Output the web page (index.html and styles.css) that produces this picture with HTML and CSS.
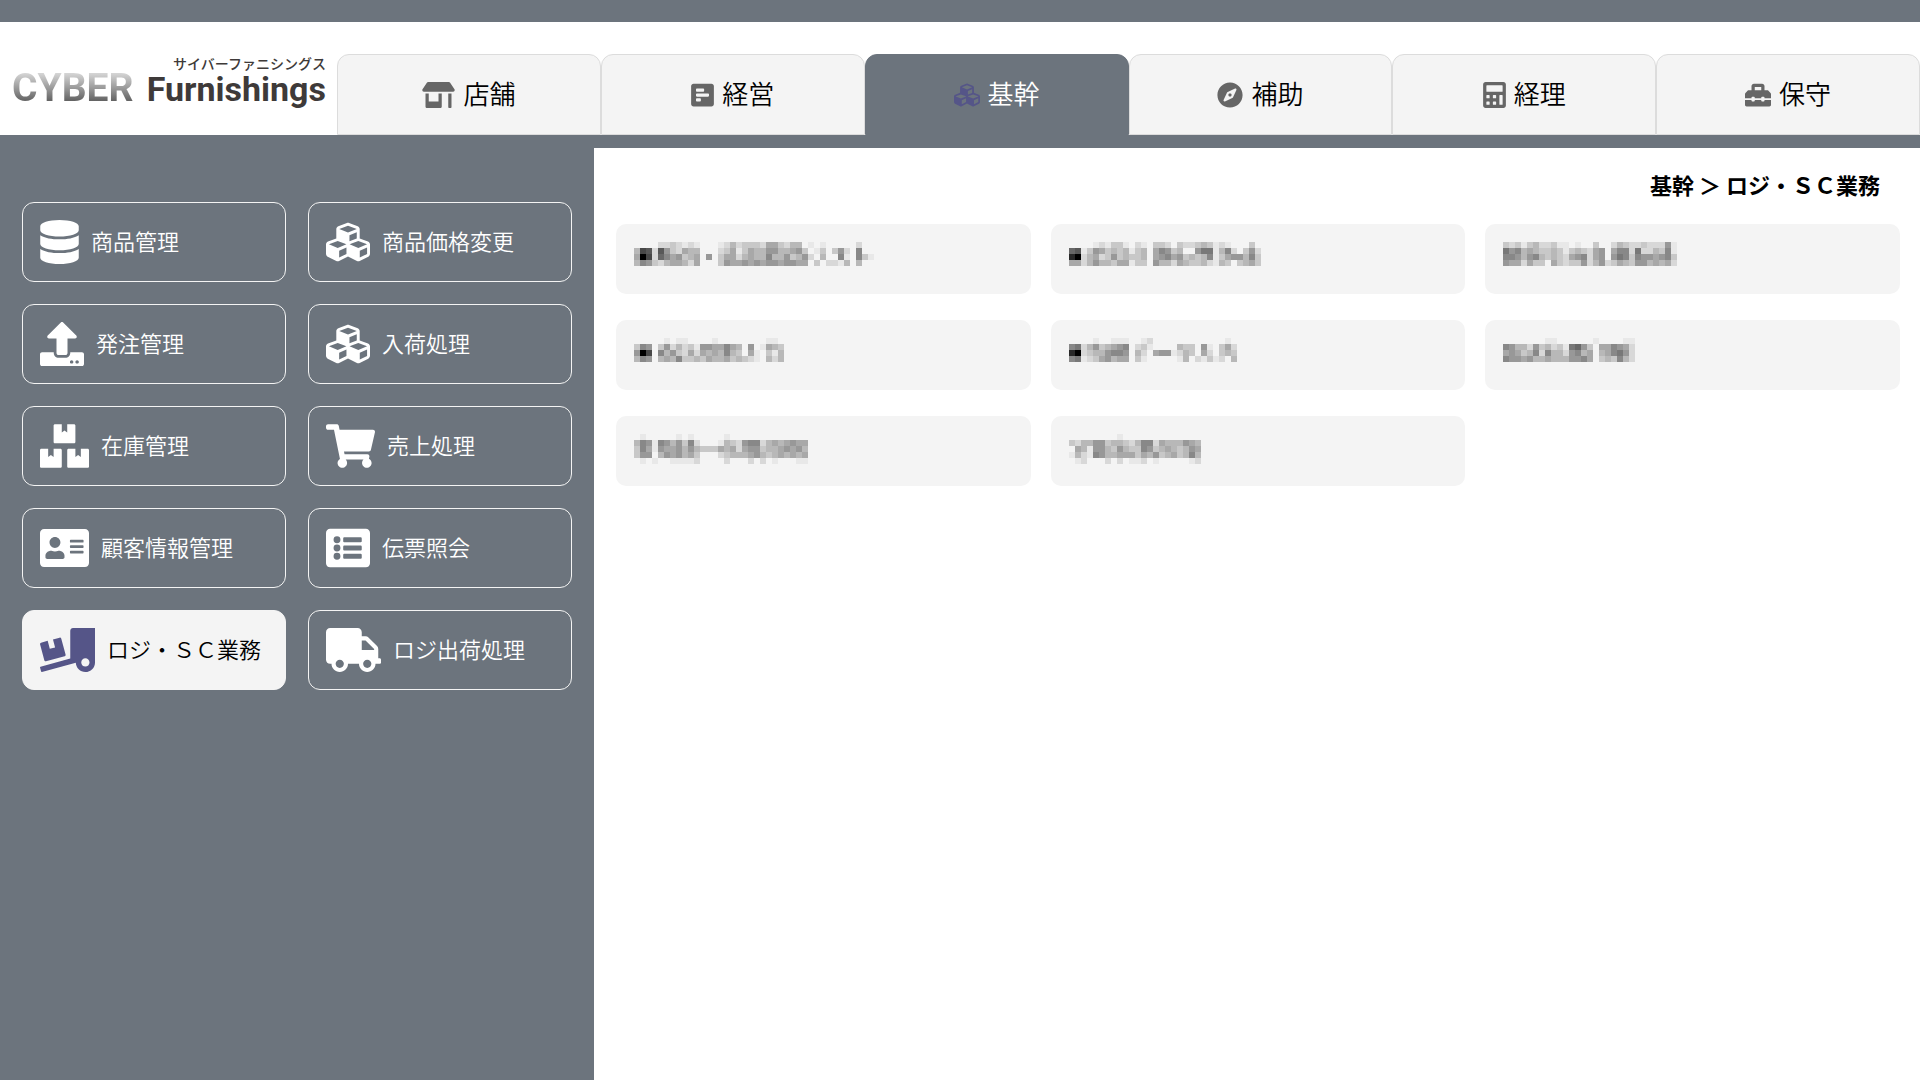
FILE: index.html
```html
<!DOCTYPE html>
<html lang="ja">
<head>
<meta charset="utf-8">
<meta name="viewport" content="width=device-width, initial-scale=1">
<title>CYBER Furnishings</title>
<link rel="stylesheet" href="styles.css">
</head>
<body>
<svg class="sprite" aria-hidden="true">
  <symbol id="i-store" viewBox="0 0 640 512"><path d="M320 384H128V224H64v256c0 17.700 14.300 32 32 32h256c17.700 0 32-14.300 32-32V224h-64v160zm314.600-241.800l-85.300-128c-6-8.900-16-14.200-26.700-14.200H117.400c-10.700 0-20.700 5.300-26.600 14.200l-85.300 128c-14.200 21.300 1 49.800 26.600 49.800H608c25.500 0 40.700-28.500 26.600-49.800zM512 496c0 8.800 7.200 16 16 16h32c8.800 0 16-7.200 16-16V224h-64v272z"/></symbol>
  <symbol id="i-poll" viewBox="0 0 448 512"><path fill-rule="evenodd" d="M448 432V80c0-26.500-21.500-48-48-48H48C21.500 32 0 53.500 0 80v352c0 26.500 21.500 48 48 48h352c26.500 0 48-21.500 48-48zM112 192c-8.800 0-16-7.200-16-16v-32c0-8.800 7.200-16 16-16h128c8.800 0 16 7.200 16 16v32c0 8.800-7.200 16-16 16zm0 96c-8.800 0-16-7.200-16-16v-32c0-8.800 7.200-16 16-16h224c8.800 0 16 7.200 16 16v32c0 8.800-7.200 16-16 16zm0 96c-8.800 0-16-7.200-16-16v-32c0-8.800 7.200-16 16-16h64c8.800 0 16 7.200 16 16v32c0 8.800-7.200 16-16 16z"/></symbol>
  <symbol id="i-cubes" viewBox="0 0 512 512"><path d="M488.600 250.200L392 214V105.500c0-15-9.300-28.400-23.400-33.700l-100-37.500c-8.100-3.100-17.100-3.100-25.300 0l-100 37.500c-14.100 5.300-23.400 18.700-23.400 33.700V214l-96.600 36.200C9.300 255.500 0 268.900 0 283.900V394c0 13.600 7.700 26.100 19.900 32.200l100 50c10.100 5.100 22.100 5.100 32.200 0l103.900-52 103.900 52c10.100 5.100 22.100 5.100 32.200 0l100-50c12.200-6.100 19.900-18.600 19.900-32.200V283.900c0-15-9.300-28.400-23.400-33.700zM358 214.800l-85 31.900v-68.200l85-37v73.300zM154 104.100l102-38.200 102 38.200v.6l-102 41.400-102-41.400v-.6zm84 291.100l-85 42.500v-79.100l85-38.800v75.400zm0-112l-102 41.400-102-41.400v-.6l102-38.200 102 38.200v.6zm240 112l-85 42.500v-79.100l85-38.800v75.400zm0-112l-102 41.400-102-41.400v-.6l102-38.200 102 38.200v.6z"/></symbol>
  <symbol id="i-compass" viewBox="0 0 496 512"><path d="M225.380 233.370c-12.500 12.500-12.500 32.760 0 45.250 12.490 12.500 32.760 12.500 45.250 0 12.500-12.500 12.500-32.760 0-45.250-12.500-12.490-32.760-12.490-45.250 0zM248 8C111.030 8 0 119.030 0 256s111.030 248 248 248 248-111.030 248-248S384.970 8 248 8zm126.140 148.050L308.170 300.400a31.938 31.938 0 0 1-15.770 15.770l-144.340 65.970c-16.650 7.610-33.810-9.550-26.200-26.200l65.980-144.350a31.938 31.938 0 0 1 15.770-15.770l144.340-65.970c16.650-7.600 33.800 9.550 26.190 26.200z"/></symbol>
  <symbol id="i-calc" viewBox="0 0 448 512"><path fill-rule="evenodd" d="M400 0H48C22.400 0 0 22.400 0 48v416c0 25.600 22.400 48 48 48h352c25.600 0 48-22.400 48-48V48c0-25.600-22.400-48-48-48zM76 64h296q12 0 12 12v104q0 12-12 12H76q-12 0-12-12V76q0-12 12-12zM76 256h40q12 0 12 12v40q0 12-12 12H76q-12 0-12-12v-40q0-12 12-12zM204 256h40q12 0 12 12v40q0 12-12 12h-40q-12 0-12-12v-40q0-12 12-12zM76 384h40q12 0 12 12v40q0 12-12 12H76q-12 0-12-12v-40q0-12 12-12zM204 384h40q12 0 12 12v40q0 12-12 12h-40q-12 0-12-12v-40q0-12 12-12zM332 256h40q12 0 12 12v168q0 12-12 12h-40q-12 0-12-12V268q0-12 12-12z"/></symbol>
  <symbol id="i-toolbox" viewBox="0 0 512 512"><path d="M502.630 214.630l-45.250-45.250c-6-6-14.140-9.370-22.630-9.370H384V80c0-26.510-21.490-48-48-48H176c-26.510 0-48 21.490-48 48v80H77.250c-8.490 0-16.620 3.370-22.630 9.370L9.370 214.630c-6 6-9.370 14.140-9.370 22.630V320h128v-16c0-8.840 7.160-16 16-16h32c8.840 0 16 7.160 16 16v16h128v-16c0-8.840 7.160-16 16-16h32c8.840 0 16 7.160 16 16v16h128v-82.750c0-8.480-3.370-16.620-9.370-22.620zM320 160H192V96h128v64zm64 208c0 8.840-7.160 16-16 16h-32c-8.840 0-16-7.160-16-16v-16H192v16c0 8.840-7.160 16-16 16h-32c-8.840 0-16-7.160-16-16v-16H0v96c0 17.670 14.330 32 32 32h448c17.670 0 32-14.330 32-32v-96H384v16z"/></symbol>
  <symbol id="i-database" viewBox="0 0 448 512"><path d="M448 73.143v45.714C448 159.143 347.667 192 224 192S0 159.143 0 118.857V73.143C0 32.857 100.333 0 224 0s224 32.857 224 73.143zM448 176v102.857C448 319.143 347.667 352 224 352S0 319.143 0 278.857V176c48.125 33.143 136.208 48.572 224 48.572S399.874 209.143 448 176zm0 160v102.857C448 479.143 347.667 512 224 512S0 479.143 0 438.857V336c48.125 33.143 136.208 48.572 224 48.572S399.874 369.143 448 336z"/></symbol>
  <symbol id="i-upload" viewBox="0 0 512 512"><path d="M296 384h-80c-13.300 0-24-10.700-24-24V192h-87.700c-17.800 0-26.700-21.500-14.100-34.100L242.300 5.700c7.500-7.500 19.800-7.500 27.300 0l152.200 152.200c12.600 12.600 3.700 34.100-14.100 34.100H320v168c0 13.300-10.700 24-24 24zm216-8v112c0 13.300-10.700 24-24 24H24c-13.300 0-24-10.700-24-24V376c0-13.300 10.700-24 24-24h136v8c0 30.900 25.100 56 56 56h80c30.900 0 56-25.100 56-56v-8h136c13.300 0 24 10.700 24 24zm-124 88c0-11-9-20-20-20s-20 9-20 20 9 20 20 20 20-9 20-20zm64 0c0-11-9-20-20-20s-20 9-20 20 9 20 20 20 20-9 20-20z"/></symbol>
  <symbol id="i-boxes" viewBox="0 0 576 512"><path d="M560 288h-80v96l-32-21.300-32 21.300v-96h-80c-8.800 0-16 7.200-16 16v192c0 8.800 7.200 16 16 16h224c8.800 0 16-7.200 16-16V304c0-8.800-7.200-16-16-16zm-384-64h224c8.800 0 16-7.200 16-16V16c0-8.800-7.200-16-16-16h-80v96l-32-21.300L256 96V0h-80c-8.800 0-16 7.200-16 16v192c0 8.800 7.200 16 16 16zm64 64h-80v96l-32-21.300L96 384v-96H16c-8.800 0-16 7.200-16 16v192c0 8.800 7.200 16 16 16h224c8.800 0 16-7.200 16-16V304c0-8.800-7.200-16-16-16z"/></symbol>
  <symbol id="i-cart" viewBox="0 0 576 512"><path d="M528.120 301.319l47.273-208C578.806 78.301 567.391 64 551.990 64H159.208l-9.166-44.810C147.758 8.021 137.930 0 126.529 0H24C10.745 0 0 10.745 0 24v16c0 13.255 10.745 24 24 24h69.883l70.248 343.435C147.325 417.100 136 435.222 136 456c0 30.928 25.072 56 56 56s56-25.072 56-56c0-15.674-6.447-29.835-16.824-40h209.647C430.447 426.165 424 440.326 424 456c0 30.928 25.072 56 56 56s56-25.072 56-56c0-22.172-12.888-41.332-31.579-50.405l5.517-24.276c3.413-15.018-8.002-29.319-23.403-29.319H218.117l-6.545-32h293.145c11.206 0 20.920-7.754 23.403-18.681z"/></symbol>
  <symbol id="i-card" viewBox="0 0 576 512"><path fill-rule="evenodd" d="M528 32H48C21.500 32 0 53.500 0 80v352c0 26.500 21.500 48 48 48h480c26.500 0 48-21.500 48-48V80c0-26.500-21.500-48-48-48zm-352 96c35.300 0 64 28.700 64 64s-28.700 64-64 64-64-28.700-64-64 28.700-64 64-64zm112 236.800c0 10.600-10 19.200-22.400 19.200H86.400C74 384 64 375.400 64 364.800v-19.200c0-31.800 30.100-57.600 67.200-57.600h5c12.300 5.100 25.700 8 39.800 8s27.600-2.900 39.800-8h5c37.100 0 67.200 25.800 67.200 57.600zM360 288h144q8 0 8 8v16q0 8-8 8H360q-8 0-8-8v-16q0-8 8-8zM360 224h144q8 0 8 8v16q0 8-8 8H360q-8 0-8-8v-16q0-8 8-8zM360 160h144q8 0 8 8v16q0 8-8 8H360q-8 0-8-8v-16q0-8 8-8z"/></symbol>
  <symbol id="i-list" viewBox="0 0 512 512"><path fill-rule="evenodd" d="M464 480H48c-26.500 0-48-21.500-48-48V80c0-26.500 21.500-48 48-48h416c26.500 0 48 21.500 48 48v352c0 26.500-21.500 48-48 48zM128 120a40 40 0 1 0 0 80 40 40 0 0 0 0-80zm0 96a40 40 0 1 0 0 80 40 40 0 0 0 0-80zm0 96a40 40 0 1 0 0 80 40 40 0 0 0 0-80zM212 132h192q12 0 12 12v32q0 12-12 12H212q-12 0-12-12v-32q0-12 12-12zm0 96h192q12 0 12 12v32q0 12-12 12H212q-12 0-12-12v-32q0-12 12-12zm0 96h192q12 0 12 12v32q0 12-12 12H212q-12 0-12-12v-32q0-12 12-12z"/></symbol>
  <symbol id="i-loading" viewBox="0 0 640 512"><path d="M50.200 375.600c2.300 8.500 11.100 13.600 19.600 11.300l216.400-58c8.500-2.300 13.600-11.100 11.300-19.600l-49.700-185.500c-2.300-8.500-11.100-13.600-19.600-11.300L151 133.300l24.800 92.700-61.800 16.500-24.800-92.700-77.300 20.700C3.400 172.800-1.700 181.600.6 190.100l49.600 185.500zM384 0c-17.700 0-32 14.300-32 32v323.600L5.900 450c-4.300 1.200-6.800 5.600-5.600 9.800l12.600 46.300c1.200 4.300 5.600 6.800 9.800 5.600l393.700-107.400C418.800 464.100 467.600 512 528 512c61.900 0 112-50.100 112-112V0H384zm144 448c-26.500 0-48-21.500-48-48s21.500-48 48-48 48 21.500 48 48-21.500 48-48 48z"/></symbol>
  <symbol id="i-truck" viewBox="0 0 640 512"><path d="M624 352h-16V243.900c0-12.700-5.100-24.900-14.100-33.900L494 110.100c-9-9-21.200-14.100-33.900-14.100H416V48c0-26.500-21.500-48-48-48H48C21.500 0 0 21.500 0 48v320c0 26.500 21.500 48 48 48h16c0 53 43 96 96 96s96-43 96-96h128c0 53 43 96 96 96s96-43 96-96h48c8.800 0 16-7.200 16-16v-32c0-8.800-7.200-16-16-16zM160 464c-26.500 0-48-21.500-48-48s21.500-48 48-48 48 21.500 48 48-21.500 48-48 48zm320 0c-26.500 0-48-21.500-48-48s21.500-48 48-48 48 21.500 48 48-21.500 48-48 48zm80-208H416V144h44.100l99.900 99.900V256z"/></symbol>
</svg>

<header class="header">
  <a class="logo" href="#">
    <span class="logo-kana">サイバーファニシングス</span>
    <span class="logo-name"><span class="logo-cyber">CYBER</span><span class="logo-furnishings">Furnishings</span></span>
  </a>
  <nav class="tabs">
    <a class="tab" href="#"><svg class="tab-icon tab-icon-wide"><use href="#i-store"/></svg><span class="label">店舗</span></a>
    <a class="tab" href="#"><svg class="tab-icon tab-icon-narrow"><use href="#i-poll"/></svg><span class="label">経営</span></a>
    <a class="tab tab-active" href="#" aria-current="page"><svg class="tab-icon"><use href="#i-cubes"/></svg><span class="label">基幹</span></a>
    <a class="tab" href="#"><svg class="tab-icon"><use href="#i-compass"/></svg><span class="label">補助</span></a>
    <a class="tab" href="#"><svg class="tab-icon tab-icon-narrow"><use href="#i-calc"/></svg><span class="label">経理</span></a>
    <a class="tab" href="#"><svg class="tab-icon"><use href="#i-toolbox"/></svg><span class="label">保守</span></a>
  </nav>
</header>

<div class="layout">
  <nav class="sidebar">
    <a class="menu" href="#"><svg class="menu-icon icon-448"><use href="#i-database"/></svg><span class="label">商品管理</span></a>
    <a class="menu" href="#"><svg class="menu-icon icon-512"><use href="#i-cubes"/></svg><span class="label">商品価格変更</span></a>
    <a class="menu" href="#"><svg class="menu-icon icon-512"><use href="#i-upload"/></svg><span class="label">発注管理</span></a>
    <a class="menu" href="#"><svg class="menu-icon icon-512"><use href="#i-cubes"/></svg><span class="label">入荷処理</span></a>
    <a class="menu" href="#"><svg class="menu-icon icon-576"><use href="#i-boxes"/></svg><span class="label">在庫管理</span></a>
    <a class="menu" href="#"><svg class="menu-icon icon-576"><use href="#i-cart"/></svg><span class="label">売上処理</span></a>
    <a class="menu" href="#"><svg class="menu-icon icon-576"><use href="#i-card"/></svg><span class="label">顧客情報管理</span></a>
    <a class="menu" href="#"><svg class="menu-icon icon-512"><use href="#i-list"/></svg><span class="label">伝票照会</span></a>
    <a class="menu menu-active" href="#" aria-current="page"><svg class="menu-icon icon-640"><use href="#i-loading"/></svg><span class="label">ロジ・ＳＣ業務</span></a>
    <a class="menu" href="#"><svg class="menu-icon icon-640"><use href="#i-truck"/></svg><span class="label">ロジ出荷処理</span></a>
  </nav>
  <main class="main">
    <h1 class="breadcrumb">基幹 ＞ ロジ・ＳＣ業務</h1>
    <div class="cards" id="cards"></div>
  </main>
</div>
<script src="cards.js"></script>
</body>
</html>
```
FILE: styles.css
```css
* {
  box-sizing: border-box;
}

body {
  margin: 0;
  min-height: 100vh;
  display: flex;
  flex-direction: column;
  background: #fff;
  color: #000;
  font-family: "Noto Sans CJK JP", sans-serif;
}

a {
  color: inherit;
  text-decoration: none;
}

.sprite {
  display: none;
}

.header {
  display: flex;
  align-items: flex-end;
  border-top: 22px solid #6c747d;
  border-bottom: 13px solid #6c747d;
  padding-top: 32px;
}

.logo {
  flex: 0 0 337px;
  align-self: flex-start;
  display: flex;
  flex-direction: column;
  padding: 2px 11px 0 12px;
}

.logo-kana {
  align-self: flex-end;
  font-size: 14px;
  line-height: 14px;
  font-weight: 500;
  color: #3e3a39;
}

.logo-name {
  display: flex;
  align-items: baseline;
  justify-content: space-between;
  font-family: Roboto, sans-serif;
  font-weight: 700;
  font-size: 34px;
  line-height: 36px;
}

.logo-cyber {
  background: linear-gradient(#d4d4d4 10%, #9a9a9a 50%, #555 95%);
  background-clip: text;
  color: transparent;
  font-size: 39px;
}

.logo-furnishings {
  color: #3e3a39;
}

.tabs {
  flex: 1;
  display: grid;
  grid-template-columns: repeat(6, 1fr);
}

.tab {
  display: flex;
  align-items: center;
  justify-content: center;
  gap: 8px;
  height: 81px;
  border: 1px solid #dcdcdc;
  border-radius: 12px 12px 0 0;
  background: #f4f4f4;
  font-size: 26px;
  line-height: 40px;
  font-weight: 350;
}

.tab-active {
  background: #6c747d;
  border-color: #6c747d;
  color: #fff;
}

.label {
  padding-bottom: 4px;
}

.tab-icon {
  width: 26px;
  height: 26px;
  fill: #666;
}

.tab-icon-wide {
  width: 33px;
}

.tab-icon-narrow {
  width: 23px;
}

.tab-active .tab-icon,
.menu-active .menu-icon {
  fill: #555588;
}

.layout {
  flex: 1;
  display: flex;
}

.sidebar {
  flex: 0 0 594px;
  display: grid;
  grid-template-columns: 1fr 1fr;
  align-content: start;
  gap: 22px;
  padding: 54px 22px;
  background: #6c747d;
}

.menu {
  display: flex;
  align-items: center;
  gap: 12px;
  height: 80px;
  padding: 0 17px;
  border: 1px solid #f4f4f4;
  border-radius: 12px;
  color: #fff;
  font-size: 22px;
  line-height: 32px;
  font-weight: 350;
}

.menu-active {
  background: #f4f4f4;
  color: #000;
}

.menu-icon {
  flex: none;
  height: 44px;
  fill: #fff;
}

.icon-448 {
  width: 39px;
}

.icon-512 {
  width: 44px;
}

.icon-576 {
  width: 49px;
}

.icon-640 {
  width: 55px;
}

.main {
  flex: 1;
  padding: 20px 20px 20px 22px;
}

.breadcrumb {
  margin: 0 20px 24px 0;
  text-align: right;
  font-size: 22px;
  line-height: 32px;
  font-weight: 700;
}

.cards {
  display: grid;
  grid-template-columns: repeat(3, 1fr);
  gap: 26px 20px;
}

.card {
  display: flex;
  align-items: flex-start;
  height: 70px;
  padding: 18px;
  border: 0;
  border-radius: 10px;
  background: #f4f4f4;
}

.mosaic {
  flex: none;
}
```
FILE: cards.js
```js
// Masked labels: each string is a row of 6px cells, one hex digit of grey per cell (f = background).
const CELL = 6;
const labels = [
  ["ffffddcdedefffedbdcccdaacdbbfefefffffdff", "b45d59cdabbfffdcaecabb99bba9cfecfc9df8ff", "a04d68a9cbaf9fcaadbabb8bb9cb9dfbff8ef8ce", "b89cdbaabdafffc9aa9a9a99a99aafcfddebfbff"],
  ["ffffedeccefdefccdfcddcbcedefffcf", "65ec9acbcbecbfa89cbff977eb8dfc9d", "20dbadc9cbccbfa98a9cbcb8eca99b8c", "aadb9bbcaaeccf9bbdabccbdebcfcbac"],
  ["cdcecbddceefeffcffdbcddcddd9e", "798babccbcecbcda9fa88d7ddbc8e", "889b98bcbcda98da9f978c899a98c", "9aadaccfacdcc9db9dcabc99babad"],
  ["fffffefeeffffeffffffffeef", "c89fc9dbdce99aa8abf9feabc", "904f8b9cdadabab8bcfaefceb", "b89fbab8ccbcabbacbcdefbdb"],
  ["ffffeffeeeffedffffffffffffef", "87db9cba98fdceffffbccf9efcad", "20dcbb9889fbdfa99edbcfadfcbc", "87edca9baafcefffffebfdecedfb"],
  ["fffffffeeffffffeffffee", "89bbd9cbdce769cfaa89ad", "a9acb8d8bbd98bafba879d", "899a9bbabbb998afcbc8bd"],
  ["fefffffefefffffefffffffffffff", "b89e89b9c8dfffebcd988dbaba9aa", "c8ae9aa9b9bcccabada99cbba9a9b", "c99fb9a9bacfffdcbbba9bcbababa", "fefeffeeeedffffdfffdfdfefffee"],
  ["ffffffffefffffffffffff", "cdbb99cbbcdb88dabbb9ab", "fabe99bc9bcc89cbabcb9a", "ebde89bbaaacab9cbacb8b", "fedfffdfdfeedfefffffed"]
];
const NS = "http://www.w3.org/2000/svg";
const cards = document.getElementById("cards");
labels.forEach((rows, n) => {
  const card = document.createElement("button");
  card.type = "button";
  card.className = "card";
  card.setAttribute("aria-label", "メニュー " + (n + 1));
  const svg = document.createElementNS(NS, "svg");
  svg.setAttribute("class", "mosaic");
  svg.setAttribute("width", rows[0].length * CELL);
  svg.setAttribute("height", rows.length * CELL);
  svg.setAttribute("shape-rendering", "crispEdges");
  rows.forEach((row, y) => [...row].forEach((digit, x) => {
    if (digit === "f") return;
    const level = parseInt(digit, 16) * 16 + (digit === "0" ? 0 : 8);
    const cell = document.createElementNS(NS, "rect");
    cell.setAttribute("x", x * CELL);
    cell.setAttribute("y", y * CELL);
    cell.setAttribute("width", CELL);
    cell.setAttribute("height", CELL);
    cell.setAttribute("fill", `rgb(${level},${level},${level})`);
    svg.append(cell);
  }));
  card.append(svg);
  cards.append(card);
});
```
